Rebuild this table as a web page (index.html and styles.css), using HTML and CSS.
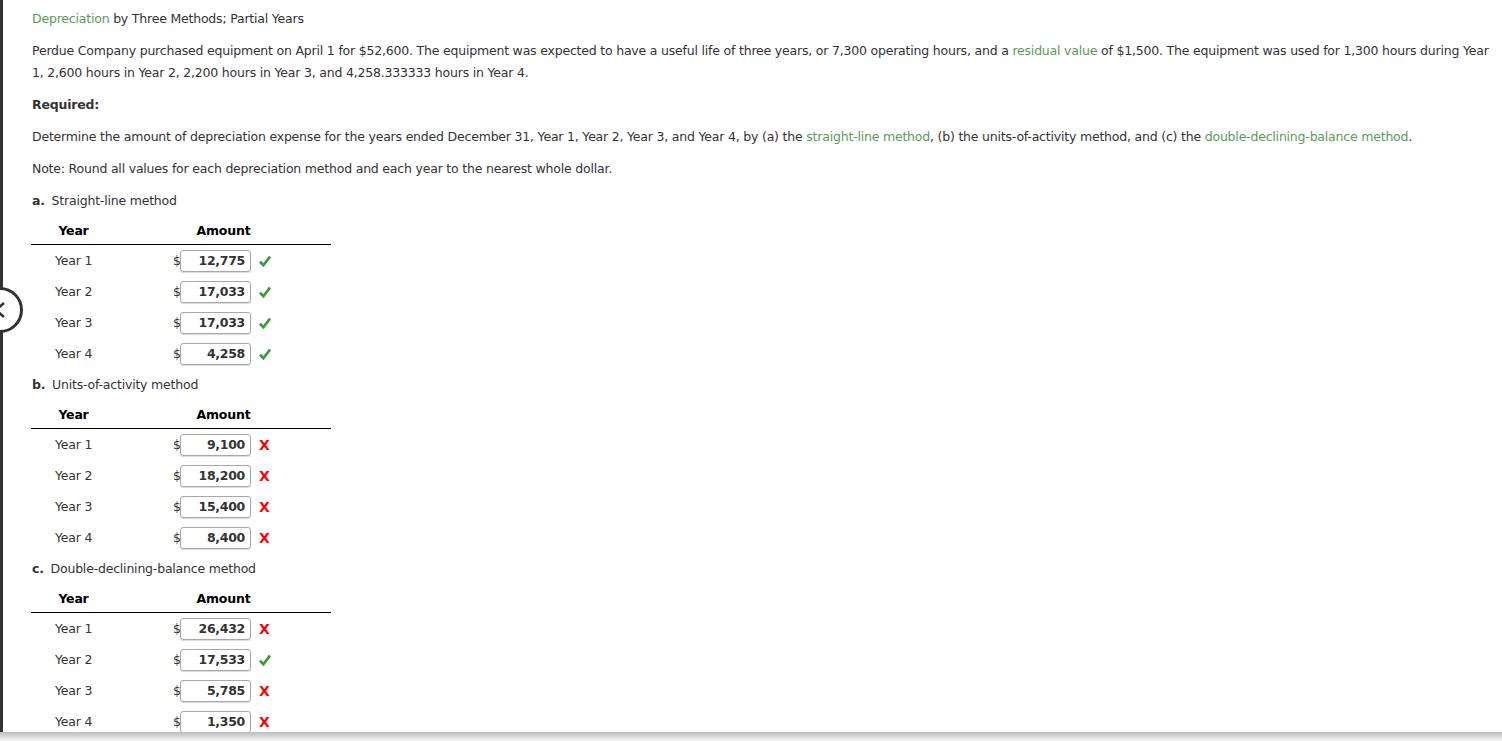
FILE: index.html
```html
<!DOCTYPE html>
<html>
<head>
<meta charset="utf-8">
<link rel="stylesheet" href="styles.css">
</head>
<body>
<div class="frame">
  <div class="rail"></div>
  <main class="content">
    <p class="title"><span class="term">Depreciation</span> by Three Methods; Partial Years</p>
    <p class="para">Perdue Company purchased equipment on April 1 for $52,600. The equipment was expected to have a useful life of three years, or 7,300 operating hours, and a <span class="term">residual value</span> of $1,500. The equipment was used for 1,300 hours during Year 1, 2,600 hours in Year 2, 2,200 hours in Year 3, and 4,258.333333 hours in Year 4.</p>
    <p class="para"><strong class="req">Required:</strong></p>
    <p class="para">Determine the amount of depreciation expense for the years ended December 31, Year 1, Year 2, Year 3, and Year 4, by (a) the <span class="term">straight-line method</span>, (b) the units-of-activity method, and (c) the <span class="term">double-declining-balance method</span>.</p>
    <p class="para">Note: Round all values for each depreciation method and each year to the nearest whole dollar.</p>

    <section class="part">
      <p class="label"><b>a.</b> Straight-line method</p>
      <div class="table">
        <div class="hrow"><div class="hcell yc">Year</div><div class="hcell ac">Amount</div></div>
        <div class="row"><div class="ycell">Year 1</div><div class="acell"><span class="cur">$</span><span class="box">12,775</span><span class="ok"><svg viewBox="0 0 12 12" width="12" height="12"><path d="M1 6.8 L4.4 10.2 L11 1.6"/></svg></span></div></div>
        <div class="row"><div class="ycell">Year 2</div><div class="acell"><span class="cur">$</span><span class="box">17,033</span><span class="ok"><svg viewBox="0 0 12 12" width="12" height="12"><path d="M1 6.8 L4.4 10.2 L11 1.6"/></svg></span></div></div>
        <div class="row"><div class="ycell">Year 3</div><div class="acell"><span class="cur">$</span><span class="box">17,033</span><span class="ok"><svg viewBox="0 0 12 12" width="12" height="12"><path d="M1 6.8 L4.4 10.2 L11 1.6"/></svg></span></div></div>
        <div class="row"><div class="ycell">Year 4</div><div class="acell"><span class="cur">$</span><span class="box">4,258</span><span class="ok"><svg viewBox="0 0 12 12" width="12" height="12"><path d="M1 6.8 L4.4 10.2 L11 1.6"/></svg></span></div></div>
      </div>
    </section>

    <section class="part">
      <p class="label"><b>b.</b> Units-of-activity method</p>
      <div class="table">
        <div class="hrow"><div class="hcell yc">Year</div><div class="hcell ac">Amount</div></div>
        <div class="row"><div class="ycell">Year 1</div><div class="acell"><span class="cur">$</span><span class="box">9,100</span><span class="bad">X</span></div></div>
        <div class="row"><div class="ycell">Year 2</div><div class="acell"><span class="cur">$</span><span class="box">18,200</span><span class="bad">X</span></div></div>
        <div class="row"><div class="ycell">Year 3</div><div class="acell"><span class="cur">$</span><span class="box">15,400</span><span class="bad">X</span></div></div>
        <div class="row"><div class="ycell">Year 4</div><div class="acell"><span class="cur">$</span><span class="box">8,400</span><span class="bad">X</span></div></div>
      </div>
    </section>

    <section class="part">
      <p class="label"><b>c.</b> Double-declining-balance method</p>
      <div class="table">
        <div class="hrow"><div class="hcell yc">Year</div><div class="hcell ac">Amount</div></div>
        <div class="row"><div class="ycell">Year 1</div><div class="acell"><span class="cur">$</span><span class="box">26,432</span><span class="bad">X</span></div></div>
        <div class="row"><div class="ycell">Year 2</div><div class="acell"><span class="cur">$</span><span class="box">17,533</span><span class="ok"><svg viewBox="0 0 12 12" width="12" height="12"><path d="M1 6.8 L4.4 10.2 L11 1.6"/></svg></span></div></div>
        <div class="row"><div class="ycell">Year 3</div><div class="acell"><span class="cur">$</span><span class="box">5,785</span><span class="bad">X</span></div></div>
        <div class="row"><div class="ycell">Year 4</div><div class="acell"><span class="cur">$</span><span class="box">1,350</span><span class="bad">X</span></div></div>
      </div>
    </section>
  </main>
</div>
<div class="prev"><svg viewBox="0 0 46 46" width="46" height="46"><circle cx="23" cy="23" r="21.5"/><path d="M27 16 L19 23 L27 30"/></svg></div>
<div class="shade"></div>
</body>
</html>
```

FILE: styles.css
```css
html, body {
  margin: 0;
  padding: 0;
  background: #fff;
  overflow: hidden;
}
body {
  font-family: "DejaVu Sans", Verdana, sans-serif;
  font-size: 12.5px;
  letter-spacing: -0.2px;
  color: #333;
}
.frame {
  display: flex;
  min-height: 741px;
}
.rail {
  width: 3px;
  flex: 0 0 3px;
  background: #333;
}
.content {
  flex: 1;
  padding: 8px 12px 0 28px;
}
p {
  margin: 0;
}
.title, .para {
  line-height: 22px;
  margin-bottom: 10px;
  padding-left: 1px;
}
.term {
  color: #5a9a5a;
}
.req {
  font-weight: bold;
  color: #333;
}
.part {
  margin-bottom: 5px;
}
.label {
  line-height: 22px;
  padding-left: 1px;
}
.label b {
  margin-right: 3px;
}
.table {
  width: 300px;
}
.hrow {
  display: flex;
  border-bottom: 1px solid #000;
  padding-top: 8px;
  padding-bottom: 2px;
  line-height: 22px;
}
.hcell {
  font-weight: bold;
  color: #000;
  text-align: center;
}
.yc, .ycell {
  width: 85px;
  flex: 0 0 85px;
}
.ac, .acell {
  flex: 1;
}
.row {
  display: flex;
  align-items: center;
  height: 31px;
}
.ycell {
  padding-left: 24px;
  box-sizing: border-box;
}
.acell {
  display: flex;
  align-items: center;
  padding-left: 57px;
}
.cur {
  width: 7px;
  color: #333;
}
.box {
  box-sizing: border-box;
  width: 71px;
  height: 22px;
  border: 1px solid #a8a8a8;
  border-radius: 3px;
  box-shadow: 0 1px 1px rgba(0,0,0,0.15);
  text-align: right;
  padding-right: 5px;
  line-height: 20px;
  font-weight: bold;
  font-size: 12.5px;
  letter-spacing: -0.3px;
  color: #333;
}
.ok {
  margin-left: 8px;
  display: flex;
}
.ok path {
  fill: none;
  stroke: #3a9a3a;
  stroke-width: 2.7;
}
.bad {
  margin-left: 8px;
  color: #f00;
  font-weight: bold;
  font-size: 14px;
  letter-spacing: 0;
}
.prev {
  position: absolute;
  left: -23px;
  top: 287px;
  width: 46px;
  height: 46px;
}
.prev circle {
  fill: #fff;
  stroke: #333;
  stroke-width: 3;
}
.prev path {
  fill: none;
  stroke: #333;
  stroke-width: 2.5;
}
.shade {
  position: fixed;
  left: 0;
  right: 0;
  bottom: 0;
  height: 9px;
  background: linear-gradient(#bdbdbd, #f4f4f4);
}
```
